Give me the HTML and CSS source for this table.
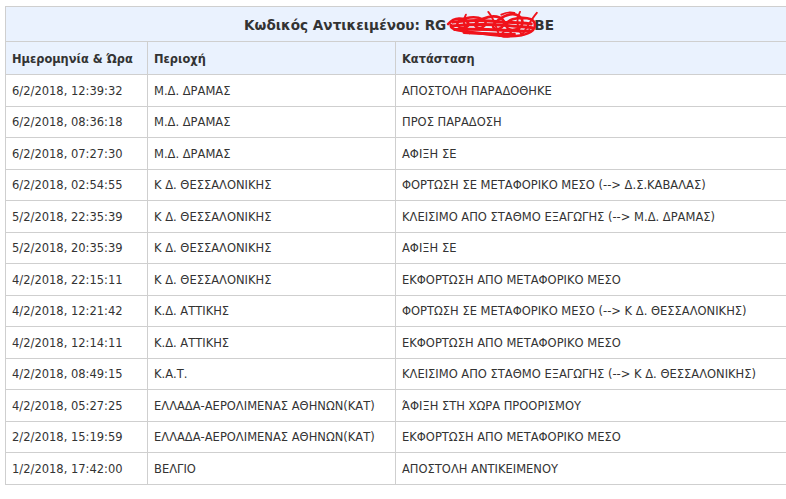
FILE: index.html
```html
<!DOCTYPE html>
<html lang="el">
<head>
<meta charset="utf-8">
<title>Tracking</title>
<link rel="stylesheet" href="styles.css">
</head>
<body>
<table class="track">
  <colgroup>
    <col class="col-date">
    <col class="col-area">
    <col class="col-status">
  </colgroup>
  <thead>
    <tr class="title-row">
      <th colspan="3" class="title">Κωδικός Αντικειμένου: RG<span class="redact"><svg class="scribble" width="96" height="28" viewBox="0 0 100 30" aria-hidden="true"><g fill="none" stroke="#f0121b" stroke-linecap="round" stroke-linejoin="round"><path stroke-width="2.8" d="M3 15 C10 7 20 8 24 13 C28 19 15 22 13 16 C11 10 30 5 40 10 C48 14 39 22 33 18 C27 13 48 4 58 8 C68 12 61 22 53 20 C45 16 66 2 76 5 C86 9 84 19 75 21 C65 23 61 14 72 10 C82 7 96 8 96 16 C96 24 84 28 70 28 C56 28 40 25 22 23 C12 22 5 20 6 16"/><path stroke-width="3.2" d="M8 13 C26 10 46 11 64 13 C76 14 86 13 92 15 M7 17 C28 15 50 15 70 17 C80 18 88 18 93 19 M10 21 C30 20 52 21 72 22 C82 23 88 23 90 22 M20 24 C36 25 54 26 74 26"/><path stroke-width="2" d="M46 2 C52 9 54 17 58 28 M80 2 C76 9 76 17 82 27 C88 18 92 10 98 3 M22 5 C18 12 20 19 26 25 M60 5 C64 3 70 2 74 3 M62 28 C58 24 66 20 70 24 C74 28 66 30 60 28"/></g></svg></span>BE</th>
    </tr>
    <tr class="head-row">
      <th>Ημερομηνία &amp; Ώρα</th>
      <th>Περιοχή</th>
      <th>Κατάσταση</th>
    </tr>
  </thead>
  <tbody>
    <tr><td>6/2/2018, 12:39:32</td><td>Μ.Δ. ΔΡΑΜΑΣ</td><td>ΑΠΟΣΤΟΛΗ ΠΑΡΑΔΟΘΗΚΕ</td></tr>
    <tr><td>6/2/2018, 08:36:18</td><td>Μ.Δ. ΔΡΑΜΑΣ</td><td>ΠΡΟΣ ΠΑΡΑΔΟΣΗ</td></tr>
    <tr><td>6/2/2018, 07:27:30</td><td>Μ.Δ. ΔΡΑΜΑΣ</td><td>ΑΦΙΞΗ ΣΕ</td></tr>
    <tr><td>6/2/2018, 02:54:55</td><td>Κ Δ. ΘΕΣΣΑΛΟΝΙΚΗΣ</td><td>ΦΟΡΤΩΣΗ ΣΕ ΜΕΤΑΦΟΡΙΚΟ ΜΕΣΟ (--&gt; Δ.Σ.ΚΑΒΑΛΑΣ)</td></tr>
    <tr><td>5/2/2018, 22:35:39</td><td>Κ Δ. ΘΕΣΣΑΛΟΝΙΚΗΣ</td><td>ΚΛΕΙΣΙΜΟ ΑΠΟ ΣΤΑΘΜΟ ΕΞΑΓΩΓΗΣ (--&gt; Μ.Δ. ΔΡΑΜΑΣ)</td></tr>
    <tr><td>5/2/2018, 20:35:39</td><td>Κ Δ. ΘΕΣΣΑΛΟΝΙΚΗΣ</td><td>ΑΦΙΞΗ ΣΕ</td></tr>
    <tr><td>4/2/2018, 22:15:11</td><td>Κ Δ. ΘΕΣΣΑΛΟΝΙΚΗΣ</td><td>ΕΚΦΟΡΤΩΣΗ ΑΠΟ ΜΕΤΑΦΟΡΙΚΟ ΜΕΣΟ</td></tr>
    <tr><td>4/2/2018, 12:21:42</td><td>Κ.Δ. ΑΤΤΙΚΗΣ</td><td>ΦΟΡΤΩΣΗ ΣΕ ΜΕΤΑΦΟΡΙΚΟ ΜΕΣΟ (--&gt; Κ Δ. ΘΕΣΣΑΛΟΝΙΚΗΣ)</td></tr>
    <tr><td>4/2/2018, 12:14:11</td><td>Κ.Δ. ΑΤΤΙΚΗΣ</td><td>ΕΚΦΟΡΤΩΣΗ ΑΠΟ ΜΕΤΑΦΟΡΙΚΟ ΜΕΣΟ</td></tr>
    <tr><td>4/2/2018, 08:49:15</td><td>Κ.Α.Τ.</td><td>ΚΛΕΙΣΙΜΟ ΑΠΟ ΣΤΑΘΜΟ ΕΞΑΓΩΓΗΣ (--&gt; Κ Δ. ΘΕΣΣΑΛΟΝΙΚΗΣ)</td></tr>
    <tr><td>4/2/2018, 05:27:25</td><td>ΕΛΛΑΔΑ-ΑΕΡΟΛΙΜΕΝΑΣ ΑΘΗΝΩΝ(ΚΑΤ)</td><td>ΆΦΙΞΗ ΣΤΗ ΧΩΡΑ ΠΡΟΟΡΙΣΜΟΥ</td></tr>
    <tr><td>2/2/2018, 15:19:59</td><td>ΕΛΛΑΔΑ-ΑΕΡΟΛΙΜΕΝΑΣ ΑΘΗΝΩΝ(ΚΑΤ)</td><td>ΕΚΦΟΡΤΩΣΗ ΑΠΟ ΜΕΤΑΦΟΡΙΚΟ ΜΕΣΟ</td></tr>
    <tr><td>1/2/2018, 17:42:00</td><td>ΒΕΛΓΙΟ</td><td>ΑΠΟΣΤΟΛΗ ΑΝΤΙΚΕΙΜΕΝΟΥ</td></tr>
  </tbody>
</table>
</body>
</html>
```
FILE: styles.css
```css
html, body {
  margin: 0;
  padding: 0;
  background: #fff;
  overflow: hidden;
}
body {
  padding: 6px 0 0 5px;
  font-family: "DejaVu Sans", Verdana, sans-serif;
  font-size: 11.5px;
  color: #333;
}
.track {
  border-collapse: collapse;
  table-layout: fixed;
  width: 787px;
}
.col-date { width: 142px; }
.col-area { width: 248px; }
.col-status { width: 397px; }
.track th, .track td {
  border: 1px solid #cfcfcf;
  text-align: left;
  padding: 0 4px 0 6px;
  white-space: nowrap;
  overflow: hidden;
}
.track thead th {
  background: #eaf2fe;
  font-weight: bold;
  font-size: 11.4px;
}
.title-row th.title {
  height: 34px;
  text-align: center;
  font-size: 13.6px;
  color: #333;
  padding: 0;
}
.head-row th {
  height: 31px;
  padding-top: 1px;
}
.track tbody tr { height: 31.5px; }
.track td { padding-top: 1px; }
.redact {
  display: inline-block;
  position: relative;
  width: 88px;
  height: 14px;
  vertical-align: baseline;
}
.scribble {
  position: absolute;
  left: -2px;
  top: -6px;
  overflow: visible;
}
```
